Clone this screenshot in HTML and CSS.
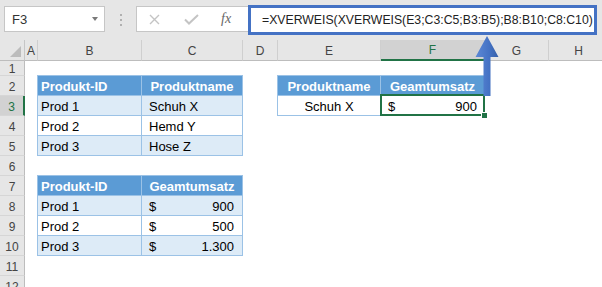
FILE: index.html
```html
<!DOCTYPE html>
<html lang="de">
<head>
    <meta charset="UTF-8">
    <title>XVERWEIS verschachtelt</title>
    <link rel="stylesheet" href="styles.css">
</head>
<body>
    <div class="toolbar">
        <div class="namebox"><span>F3</span><span class="caret"></span></div>
        <div class="grip"><i></i><i></i><i></i></div>
        <div class="fxbox">
            <svg class="cancel" width="11" height="11" viewBox="0 0 11 11"><path d="M1 1 L10 10 M10 1 L1 10" stroke="#c4c4c4" stroke-width="1.4" fill="none"/></svg>
            <svg class="check" width="15" height="11" viewBox="0 0 15 11"><path d="M1 5.5 L5 9.5 L14 1" stroke="#c4c4c4" stroke-width="2" fill="none"/></svg>
            <span class="fx">fx</span>
        </div>
        <div class="formula">=XVERWEIS(XVERWEIS(E3;C3:C5;B3:B5);B8:B10;C8:C10)</div>
    </div>

    <div class="sheet">
        <div class="corner"><span class="tri"></span></div>
        <div class="col">A</div>
        <div class="col">B</div>
        <div class="col">C</div>
        <div class="col">D</div>
        <div class="col">E</div>
        <div class="col active">F</div>
        <div class="col">G</div>
        <div class="col">H</div>

        <div class="row first"><span>1</span></div>
        <div class="row">2</div>
        <div class="row active">3</div>
        <div class="row">4</div>
        <div class="row">5</div>
        <div class="row">6</div>
        <div class="row">7</div>
        <div class="row">8</div>
        <div class="row">9</div>
        <div class="row">10</div>
        <div class="row">11</div>
        <div class="row">12</div>

        <!-- Produkte -->
        <div class="xtable t-products">
            <div class="th">Produkt-ID</div>
            <div class="th center">Produktname</div>
            <div class="td band">Prod 1</div>
            <div class="td band indent">Schuh X</div>
            <div class="td">Prod 2</div>
            <div class="td indent">Hemd Y</div>
            <div class="td band">Prod 3</div>
            <div class="td band indent">Hose Z</div>
        </div>

        <!-- Umsätze -->
        <div class="xtable t-sales">
            <div class="th">Produkt-ID</div>
            <div class="th center">Geamtumsatz</div>
            <div class="td band">Prod 1</div>
            <div class="td band money"><span>$</span><span>900</span></div>
            <div class="td">Prod 2</div>
            <div class="td money"><span>$</span><span>500</span></div>
            <div class="td band">Prod 3</div>
            <div class="td band money"><span>$</span><span>1.300</span></div>
        </div>

        <!-- Ergebnis -->
        <div class="xtable t-result">
            <div class="th center">Produktname</div>
            <div class="th center">Geamtumsatz</div>
            <div class="td center">Schuh X</div>
            <div class="td money selected"><span>$</span><span>900</span><div class="selection"><i class="handle"></i></div></div>
        </div>
    </div>

    <svg class="arrow" width="27" height="64" viewBox="0 0 27 64">
        <defs>
            <linearGradient id="arrowFill" x1="0" y1="0" x2="1" y2="0">
                <stop offset="0" stop-color="#5d89d6"/>
                <stop offset="0.6" stop-color="#4472c4"/>
                <stop offset="1" stop-color="#365fa8"/>
            </linearGradient>
        </defs>
        <polygon points="13,2 24.5,23 16.5,23 16.5,62 9.5,62 9.5,23 1.5,23" fill="url(#arrowFill)"/>
    </svg>
</body>
</html>
```

FILE: styles.css
```css
body {
    margin: 0;
    width: 602px;
    height: 287px;
    overflow: hidden;
    position: relative;
    background: #fff;
    font-family: "Liberation Sans", Arial, sans-serif;
}

/* Namensfeld + Bearbeitungsleiste */
.toolbar {
    height: 40px;
    background: #e6e6e6;
    display: flex;
    align-items: flex-start;
}
.namebox {
    box-sizing: border-box;
    width: 101px;
    height: 26px;
    margin: 6px 0 0 4px;
    padding: 0 6px 0 7px;
    background: #fff;
    border: 1px solid #c6c6c6;
    display: flex;
    align-items: center;
    justify-content: space-between;
    font-size: 13px;
    color: #333;
}
.caret {
    border-left: 3.5px solid transparent;
    border-right: 3.5px solid transparent;
    border-top: 4px solid #7a7a7a;
}
.grip {
    display: flex;
    flex-direction: column;
    gap: 3px;
    margin: 14px 0 0 15px;
}
.grip i {
    width: 2px;
    height: 2px;
    background: #b0b0b0;
}
.fxbox {
    box-sizing: border-box;
    width: 112px;
    height: 26px;
    margin: 6px 0 0 14px;
    background: #fff;
    border: 1px solid #c6c6c6;
    border-right: none;
    display: flex;
    align-items: center;
}
.cancel {
    margin-left: 12px;
}
.check {
    margin-left: 24px;
}
.fx {
    margin-left: 22px;
    font-family: "Liberation Serif", serif;
    font-style: italic;
    font-size: 14px;
    color: #666;
}
.formula {
    box-sizing: border-box;
    width: 349px;
    height: 30px;
    margin-top: 5px;
    padding-left: 11px;
    background: #fff;
    border: 3px solid #4472c4;
    font-size: 12.25px;
    line-height: 24px;
    color: #222;
    white-space: nowrap;
}

/* Tabellenblatt */
.sheet {
    display: grid;
    grid-template-columns: 25px 13px 104px 101px 35px 103px 104px 64px 60px;
    grid-template-rows: 21px 15px repeat(11, 20px);
    font-size: 12px;
    color: #444;
}
.corner,
.col,
.row {
    box-sizing: border-box;
    background: #e6e6e6;
    display: flex;
    align-items: center;
    justify-content: center;
}
.corner {
    border-right: 1px solid #c6c6c6;
    border-bottom: 1px solid #bdbdbd;
    position: relative;
}
.tri {
    position: absolute;
    right: 3px;
    bottom: 3px;
    border-left: 11px solid transparent;
    border-bottom: 11px solid #bcbcbc;
}
.col {
    border-right: 1px solid #cfcfcf;
    border-bottom: 1px solid #bdbdbd;
    padding-top: 1px;
}
.col.active {
    background: #d2d2d2;
    border-bottom: 2px solid #217346;
    color: #217346;
}
.row {
    grid-column: 1;
    border-right: 1px solid #bdbdbd;
    border-bottom: 1px solid #d6d6d6;
    padding-top: 2px;
}
.row.first {
    align-items: flex-end;
    overflow: hidden;
    padding-top: 0;
}
.row.first span {
    line-height: 14px;
    margin-bottom: -1px;
}
.row.active {
    background: #d2d2d2;
    border-right: 2px solid #217346;
    color: #217346;
}

/* Formatierte Tabellen */
.xtable {
    display: grid;
    grid-auto-rows: 20px;
    margin: -1px 0 0 -1px;
    border-top: 1px solid #9bc2e6;
    border-left: 1px solid #9bc2e6;
    font-size: 13px;
    color: #000;
    align-self: start;
    justify-self: start;
}
.t-products {
    grid-column: 3 / 5;
    grid-row: 3 / 7;
    grid-template-columns: 104px 101px;
}
.t-sales {
    grid-column: 3 / 5;
    grid-row: 8 / 12;
    grid-template-columns: 104px 101px;
}
.t-result {
    grid-column: 6 / 8;
    grid-row: 3 / 5;
    grid-template-columns: 103px 104px;
}
.th,
.td {
    box-sizing: border-box;
    border-right: 1px solid #9bc2e6;
    border-bottom: 1px solid #9bc2e6;
    padding: 3px 0 0 3px;
    line-height: 16px;
    white-space: nowrap;
}
.th {
    background: #5b9bd5;
    color: #fff;
    font-weight: bold;
}
.band {
    background: #ddebf7;
}
.center {
    text-align: center;
    padding-left: 0;
}
.indent {
    padding-left: 7px;
}
.money {
    display: flex;
    justify-content: space-between;
    padding-left: 7px;
    padding-right: 8px;
}
.t-result .money {
    padding-right: 7px;
}
.selected {
    position: relative;
}
.selection {
    position: absolute;
    left: -1px;
    top: -2px;
    right: -1px;
    bottom: -1px;
    border: 2px solid #217346;
}
.handle {
    position: absolute;
    right: -5px;
    bottom: -5px;
    width: 5px;
    height: 5px;
    background: #217346;
    border: 1px solid #fff;
}

.arrow {
    position: absolute;
    left: 474px;
    top: 34px;
    z-index: 5;
}
```
